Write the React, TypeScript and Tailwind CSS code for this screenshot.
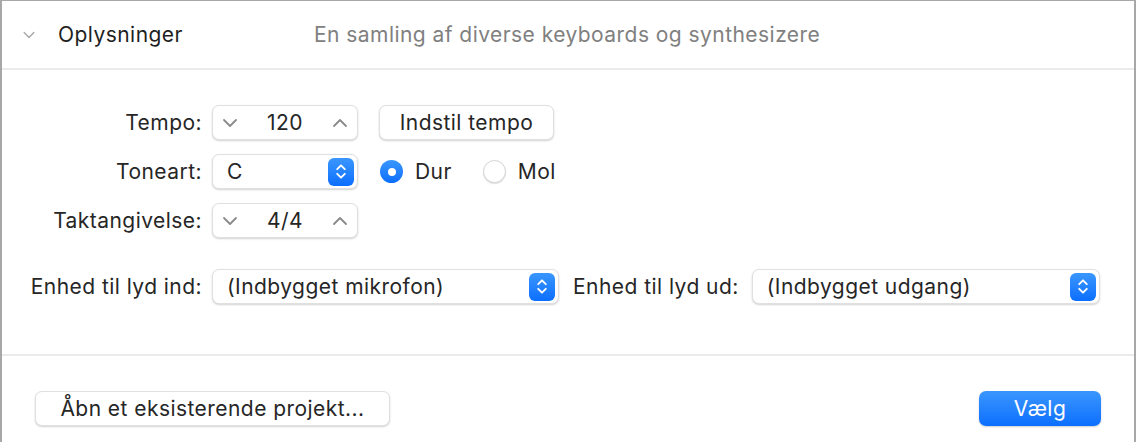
import React from "react";

const font = { fontFamily: "Inter, 'Noto Sans', sans-serif" };

function ChevronDown({ className = "" }: { className?: string }) {
  return (
    <svg viewBox="0 0 16 10" className={className} fill="none">
      <path d="M2 2l6 6 6-6" stroke="currentColor" strokeWidth="1.8" strokeLinecap="round" strokeLinejoin="round" />
    </svg>
  );
}

function ChevronUp({ className = "" }: { className?: string }) {
  return (
    <svg viewBox="0 0 16 10" className={className} fill="none">
      <path d="M2 8l6-6 6 6" stroke="currentColor" strokeWidth="1.8" strokeLinecap="round" strokeLinejoin="round" />
    </svg>
  );
}

function PopupArrows() {
  return (
    <span className="flex h-[28px] w-[26px] items-center justify-center rounded-[6px] bg-gradient-to-b from-[#3a96fd] to-[#0a6efe]">
      <svg viewBox="0 0 12 20" className="h-[19px] w-[12px]" fill="none">
        <path d="M2 7.5l4-4 4 4M2 12.5l4 4 4-4" stroke="white" strokeWidth="2" strokeLinecap="round" strokeLinejoin="round" />
      </svg>
    </span>
  );
}

const box =
  "flex h-[35px] items-center rounded-[7px] border border-[#e0e0e0] bg-white shadow-[0_1px_2px_rgba(0,0,0,0.18)]";

const txt = "text-[21px] tracking-[0.45px] text-[#262626]";

function Stepper({ value }: { value: string }) {
  return (
    <div className={`${box} w-[146px] justify-between px-[9px]`}>
      <ChevronDown className="h-[10px] w-[16px] text-[#8a8a8a]" />
      <span className={txt}>{value}</span>
      <ChevronUp className="h-[10px] w-[16px] text-[#8a8a8a]" />
    </div>
  );
}

function Popup({ value, width }: { value: string; width: string }) {
  return (
    <div className={`${box} ${width} justify-between pl-[14px] pr-[3px]`}>
      <span className={txt}>{value}</span>
      <PopupArrows />
    </div>
  );
}

function Row({ label, children }: { label: string; children: React.ReactNode }) {
  return (
    <div className="flex items-center gap-[10px]">
      <span className={`w-[200px] text-right ${txt}`}>{label}</span>
      {children}
    </div>
  );
}

export default function App() {
  return (
    <div style={font} className="h-[442px] w-[1136px] overflow-hidden bg-white">
      <div className="flex h-full flex-col border-l-2 border-r-2 border-t border-[#a8a8a8]">
        {/* Header */}
        <div className="flex h-[69px] shrink-0 items-center border-b-2 border-[#ebebeb]">
          <ChevronDown className="ml-[20px] h-[8px] w-[14px] text-[#a8a8a8]" />
          <span className="ml-[22px] w-[256px] text-[21px] tracking-[0.45px] text-[#1f1f1f]">Oplysninger</span>
          <span className="text-[21px] tracking-[0.45px] text-[#808080]">
            En samling af diverse keyboards og synthesizere
          </span>
        </div>

        {/* Form */}
        <div className="flex flex-col pt-[35px]">
          <div className="flex flex-col gap-[14px]">
            <Row label="Tempo:">
              <Stepper value="120" />
              <button className={`${box} ${txt} ml-[11px] w-[175px] justify-center`}>Indstil tempo</button>
            </Row>
            <Row label="Toneart:">
              <Popup value="C" width="w-[146px]" />
              <div className="ml-[12px] flex items-center">
                <span className="flex h-[23px] w-[23px] items-center justify-center rounded-full bg-gradient-to-b from-[#3a96fd] to-[#0a6efe]">
                  <span className="h-[8px] w-[8px] rounded-full bg-white" />
                </span>
                <span className={`ml-[12px] ${txt}`}>Dur</span>
                <span className="ml-[31px] h-[23px] w-[23px] rounded-full border border-[#d4d4d4] bg-white shadow-[0_1px_1px_rgba(0,0,0,0.12)]" />
                <span className={`ml-[12px] ${txt}`}>Mol</span>
              </div>
            </Row>
            <Row label="Taktangivelse:">
              <Stepper value="4/4" />
            </Row>
          </div>

          <div className="mt-[31px] flex items-center">
            <Row label="Enhed til lyd ind:">
              <Popup value="(Indbygget mikrofon)" width="w-[347px]" />
            </Row>
            <span className={`ml-[14px] ${txt}`}>Enhed til lyd ud:</span>
            <div className="ml-[13px]">
              <Popup value="(Indbygget udgang)" width="w-[348px]" />
            </div>
          </div>
        </div>

        <div className="mt-[50px] h-[2px] shrink-0 bg-[#ebebeb]" />

        {/* Footer */}
        <div className="flex items-center justify-between px-[33px] pt-[35px]">
          <button className={`${box} ${txt} w-[355px] justify-center`}>Åbn et eksisterende projekt...</button>
          <button className="flex h-[35px] w-[122px] items-center justify-center rounded-[7px] bg-gradient-to-b from-[#3a96fd] to-[#0a6efe] text-[21px] tracking-[0.45px] text-white shadow-[0_1px_2px_rgba(0,0,0,0.2)]">
            Vælg
          </button>
        </div>
      </div>
    </div>
  );
}
